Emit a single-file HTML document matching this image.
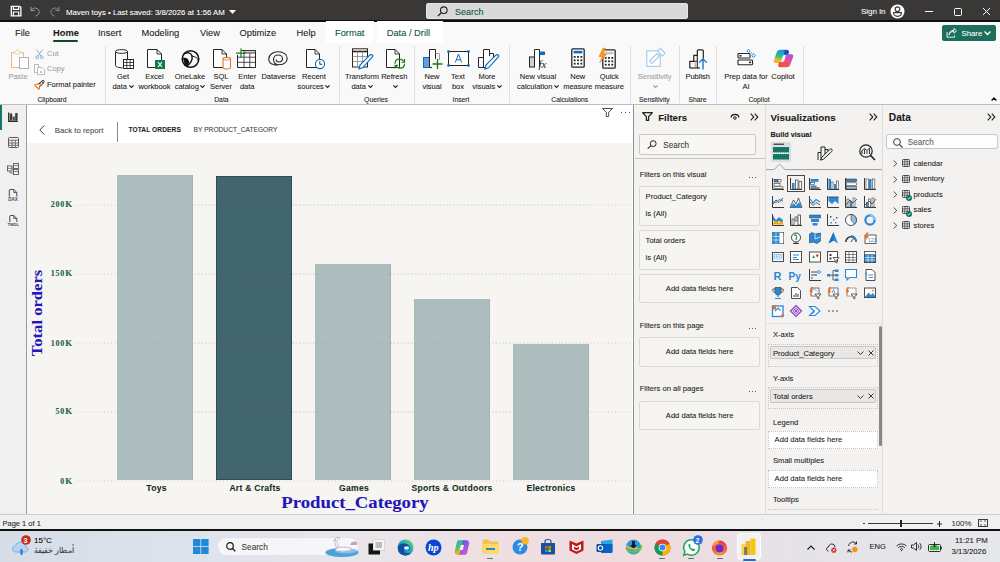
<!DOCTYPE html>
<html><head><meta charset="utf-8">
<style>
*{box-sizing:border-box}
html,body{margin:0;padding:0}
body{width:1000px;height:562px;overflow:hidden;position:relative;font-family:"Liberation Sans",sans-serif;background:#f7f7f7;color:#252423}
.t{-webkit-text-stroke:0.08px currentColor}
.a{position:absolute}
.t{position:absolute;white-space:nowrap;line-height:1}
svg{position:absolute;overflow:visible}
svg.ch{position:relative;display:inline-block;margin-left:1.5px;top:-1px}
</style></head><body>

<div class="a" style="left:0px;top:0px;width:1000px;height:21px;background:#393837;"></div>
<div class="a" style="left:0px;top:21px;width:1000px;height:83px;background:#f9f9f9;"></div>
<div class="a" style="left:0px;top:20.3px;width:1000px;height:1.3px;background:#0e0e0e;"></div>
<svg style="left:10px;top:5px" width="12" height="12" viewBox="0 0 12 12"><path d="M1.3 1.3H9.6L10.9 2.6V10.9H1.3Z" fill="none" stroke="#fff" stroke-width="1.3"/><path d="M3.4 1.3V4.3H8.7V1.3 M3.4 10.9V7H8.7V10.9" fill="none" stroke="#fff" stroke-width="1.2"/></svg>
<svg style="left:30px;top:6px" width="11" height="11" viewBox="0 0 11 11"><path d="M1 0.8V4.6H4.8" fill="none" stroke="#9a9a9a" stroke-width="1"/><path d="M1.2 4.4C2.4 2.2 5 1.4 7.2 2.6C9.6 4 9.8 7 7.8 8.8L5.5 10.2" fill="none" stroke="#9a9a9a" stroke-width="1"/></svg>
<svg style="left:49px;top:6px" width="11" height="11" viewBox="0 0 11 11"><path d="M10 0.8V4.6H6.2" fill="none" stroke="#8a8a8a" stroke-width="1"/><path d="M9.8 4.4C8.6 2.2 6 1.4 3.8 2.6C1.4 4 1.2 7 3.2 8.8L5.5 10.2" fill="none" stroke="#8a8a8a" stroke-width="1"/></svg>
<div class="t" style="left:66px;top:9px;font-size:7.8px;color:#fff;">Maven toys &#8226; Last saved: 3/8/2026 at 1:56 AM</div>
<svg style="left:229px;top:10px" width="7" height="4" viewBox="0 0 7 4"><path d="M0 0H7L3.5 4Z" fill="#fff"/></svg>
<div class="a" style="left:426px;top:3px;width:262px;height:16px;background:#d9d9d9;border-radius:2px;border:1px solid #e6e6e6"></div>
<svg style="left:437px;top:6px" width="11" height="11" viewBox="0 0 11 11"><circle cx="6.8" cy="4.2" r="3.3" fill="none" stroke="#222" stroke-width="1.1"/><path d="M4.4 6.6L1 10" stroke="#222" stroke-width="1.2"/></svg>
<div class="t" style="left:455px;top:7.5px;font-size:9px;color:#0f5444;">Search</div>
<div class="t" style="left:861px;top:8px;font-size:8px;color:#fff;">Sign in</div>
<svg style="left:890px;top:4px" width="15" height="15" viewBox="0 0 15 15"><circle cx="7.5" cy="7.5" r="7" fill="#fff"/><circle cx="7.5" cy="5.2" r="2.3" fill="none" stroke="#393837" stroke-width="1.1"/><path d="M3.5 8.6H11.5C11.5 11 9.8 12.4 7.5 12.4C5.2 12.4 3.5 11 3.5 8.6Z" fill="none" stroke="#393837" stroke-width="1.1"/></svg>
<div class="a" style="left:925px;top:11px;width:8px;height:1px;background:#fff;"></div>
<div class="a" style="left:954px;top:8px;width:8px;height:8px;background:transparent;border:1px solid #fff;border-radius:1.5px"></div>
<svg style="left:983px;top:8px" width="7" height="7" viewBox="0 0 7 7"><path d="M0 0L7 7M7 0L0 7" stroke="#fff" stroke-width="1"/></svg>
<div class="a" style="left:326px;top:21px;width:48px;height:22px;background:#fff;"></div>
<div class="a" style="left:377px;top:21px;width:66px;height:22px;background:#fff;"></div>
<div class="t" style="left:15px;top:28.8px;font-size:9.3px;color:#1b1a19;">File</div>
<div class="t" style="left:98px;top:28.8px;font-size:9.3px;color:#1b1a19;">Insert</div>
<div class="t" style="left:141.5px;top:28.8px;font-size:9.3px;color:#1b1a19;">Modeling</div>
<div class="t" style="left:200px;top:28.8px;font-size:9.3px;color:#1b1a19;">View</div>
<div class="t" style="left:239.5px;top:28.8px;font-size:9.3px;color:#1b1a19;">Optimize</div>
<div class="t" style="left:296.5px;top:28.8px;font-size:9.3px;color:#1b1a19;">Help</div>
<div class="t" style="left:53px;top:28.8px;font-size:9.3px;color:#1b1a19;font-weight:bold;">Home</div>
<div class="a" style="left:52.5px;top:40.3px;width:25.2px;height:1.7px;background:#0b4a2c;border-radius:1px"></div>
<div class="t" style="left:335px;top:29px;font-size:9.3px;color:#0a5438;">Format</div>
<div class="t" style="left:386.7px;top:29px;font-size:9.3px;color:#0a5438;">Data / Drill</div>
<div class="a" style="left:942px;top:25px;width:54px;height:16px;background:#1b6f5c;border-radius:2px"></div>
<svg style="left:946px;top:28px" width="11" height="10" viewBox="0 0 11 10"><path d="M1 4V9.2H8.5V7.5 M3 7C3.5 4.5 5.5 3.4 8 3.4V5.4L10.5 2.8L8 0.4V2.3C5 2.3 3 4.2 3 7Z" fill="none" stroke="#fff" stroke-width="0.9"/></svg>
<div class="t" style="left:961.5px;top:29.5px;font-size:7.8px;color:#fff;">Share</div>
<svg style="left:984px;top:31px" width="7" height="4" viewBox="0 0 7 4"><path d="M0.5 0.5L3.5 3.5L6.5 0.5" fill="none" stroke="#fff" stroke-width="1.4"/></svg>
<div class="t" style="left:-42px;top:73px;width:120px;text-align:center;font-size:7.5px;color:#a19f9d;">Paste</div>
<div class="t" style="left:63px;top:73px;width:120px;text-align:center;font-size:7.5px;color:#1b1a19;">Get</div>
<div class="t" style="left:63px;top:83.4px;width:120px;text-align:center;font-size:7.5px;color:#1b1a19;">data<svg class="ch" width="5" height="3" viewBox="0 0 5 3"><path d="M0.4 0.4L2.5 2.5L4.6 0.4" fill="none" stroke="#252423" stroke-width="1.2"/></svg></div>
<div class="t" style="left:94.5px;top:73px;width:120px;text-align:center;font-size:7.5px;color:#1b1a19;">Excel</div>
<div class="t" style="left:94.5px;top:83.4px;width:120px;text-align:center;font-size:7.5px;color:#1b1a19;">workbook</div>
<div class="t" style="left:130px;top:73px;width:120px;text-align:center;font-size:7.5px;color:#1b1a19;">OneLake</div>
<div class="t" style="left:130px;top:83.4px;width:120px;text-align:center;font-size:7.5px;color:#1b1a19;">catalog<svg class="ch" width="5" height="3" viewBox="0 0 5 3"><path d="M0.4 0.4L2.5 2.5L4.6 0.4" fill="none" stroke="#252423" stroke-width="1.2"/></svg></div>
<div class="t" style="left:161px;top:73px;width:120px;text-align:center;font-size:7.5px;color:#1b1a19;">SQL</div>
<div class="t" style="left:161px;top:83.4px;width:120px;text-align:center;font-size:7.5px;color:#1b1a19;">Server</div>
<div class="t" style="left:187.2px;top:73px;width:120px;text-align:center;font-size:7.5px;color:#1b1a19;">Enter</div>
<div class="t" style="left:187.2px;top:83.4px;width:120px;text-align:center;font-size:7.5px;color:#1b1a19;">data</div>
<div class="t" style="left:218.5px;top:73px;width:120px;text-align:center;font-size:7.5px;color:#1b1a19;">Dataverse</div>
<div class="t" style="left:254px;top:73px;width:120px;text-align:center;font-size:7.5px;color:#1b1a19;">Recent</div>
<div class="t" style="left:254px;top:83.4px;width:120px;text-align:center;font-size:7.5px;color:#1b1a19;">sources<svg class="ch" width="5" height="3" viewBox="0 0 5 3"><path d="M0.4 0.4L2.5 2.5L4.6 0.4" fill="none" stroke="#252423" stroke-width="1.2"/></svg></div>
<div class="t" style="left:302px;top:73px;width:120px;text-align:center;font-size:7.5px;color:#1b1a19;">Transform</div>
<div class="t" style="left:302px;top:83.4px;width:120px;text-align:center;font-size:7.5px;color:#1b1a19;">data<svg class="ch" width="5" height="3" viewBox="0 0 5 3"><path d="M0.4 0.4L2.5 2.5L4.6 0.4" fill="none" stroke="#252423" stroke-width="1.2"/></svg></div>
<div class="t" style="left:334.3px;top:73px;width:120px;text-align:center;font-size:7.5px;color:#1b1a19;">Refresh</div>
<div class="t" style="left:334.3px;top:83.4px;width:120px;text-align:center;font-size:7.5px;color:#1b1a19;"><svg class="ch" width="5" height="3" viewBox="0 0 5 3"><path d="M0.4 0.4L2.5 2.5L4.6 0.4" fill="none" stroke="#252423" stroke-width="1.2"/></svg></div>
<div class="t" style="left:372px;top:73px;width:120px;text-align:center;font-size:7.5px;color:#1b1a19;">New</div>
<div class="t" style="left:372px;top:83.4px;width:120px;text-align:center;font-size:7.5px;color:#1b1a19;">visual</div>
<div class="t" style="left:398px;top:73px;width:120px;text-align:center;font-size:7.5px;color:#1b1a19;">Text</div>
<div class="t" style="left:398px;top:83.4px;width:120px;text-align:center;font-size:7.5px;color:#1b1a19;">box</div>
<div class="t" style="left:427px;top:73px;width:120px;text-align:center;font-size:7.5px;color:#1b1a19;">More</div>
<div class="t" style="left:427px;top:83.4px;width:120px;text-align:center;font-size:7.5px;color:#1b1a19;">visuals<svg class="ch" width="5" height="3" viewBox="0 0 5 3"><path d="M0.4 0.4L2.5 2.5L4.6 0.4" fill="none" stroke="#252423" stroke-width="1.2"/></svg></div>
<div class="t" style="left:478px;top:73px;width:120px;text-align:center;font-size:7.5px;color:#1b1a19;">New visual</div>
<div class="t" style="left:478px;top:83.4px;width:120px;text-align:center;font-size:7.5px;color:#1b1a19;">calculation<svg class="ch" width="5" height="3" viewBox="0 0 5 3"><path d="M0.4 0.4L2.5 2.5L4.6 0.4" fill="none" stroke="#252423" stroke-width="1.2"/></svg></div>
<div class="t" style="left:517.75px;top:73px;width:120px;text-align:center;font-size:7.5px;color:#1b1a19;">New</div>
<div class="t" style="left:517.75px;top:83.4px;width:120px;text-align:center;font-size:7.5px;color:#1b1a19;">measure</div>
<div class="t" style="left:549.3px;top:73px;width:120px;text-align:center;font-size:7.5px;color:#1b1a19;">Quick</div>
<div class="t" style="left:549.3px;top:83.4px;width:120px;text-align:center;font-size:7.5px;color:#1b1a19;">measure</div>
<div class="t" style="left:594.7px;top:73px;width:120px;text-align:center;font-size:7.5px;color:#a19f9d;">Sensitivity</div>
<div class="t" style="left:594.7px;top:83.4px;width:120px;text-align:center;font-size:7.5px;color:#a19f9d;"><svg class="ch" width="5" height="3" viewBox="0 0 5 3"><path d="M0.4 0.4L2.5 2.5L4.6 0.4" fill="none" stroke="#a19f9d" stroke-width="1.2"/></svg></div>
<div class="t" style="left:637.7px;top:73px;width:120px;text-align:center;font-size:7.5px;color:#1b1a19;">Publish</div>
<div class="t" style="left:686px;top:73px;width:120px;text-align:center;font-size:7.5px;color:#1b1a19;">Prep data for</div>
<div class="t" style="left:686px;top:83.4px;width:120px;text-align:center;font-size:7.5px;color:#1b1a19;">AI</div>
<div class="t" style="left:723px;top:73px;width:120px;text-align:center;font-size:7.5px;color:#1b1a19;">Copilot</div>
<div class="t" style="left:47px;top:49.6px;font-size:7.5px;color:#a19f9d;">Cut</div>
<div class="t" style="left:47px;top:65.2px;font-size:7.5px;color:#a19f9d;">Copy</div>
<div class="t" style="left:47px;top:81px;font-size:7.5px;color:#1b1a19;">Format painter</div>
<div class="t" style="left:-8px;top:97px;width:120px;text-align:center;font-size:6.8px;color:#1b1a19;">Clipboard</div>
<div class="t" style="left:161.4px;top:97px;width:120px;text-align:center;font-size:6.8px;color:#1b1a19;">Data</div>
<div class="t" style="left:316px;top:97px;width:120px;text-align:center;font-size:6.8px;color:#1b1a19;">Queries</div>
<div class="t" style="left:401px;top:97px;width:120px;text-align:center;font-size:6.8px;color:#1b1a19;">Insert</div>
<div class="t" style="left:509.75px;top:97px;width:120px;text-align:center;font-size:6.8px;color:#1b1a19;">Calculations</div>
<div class="t" style="left:594.4px;top:97px;width:120px;text-align:center;font-size:6.8px;color:#1b1a19;">Sensitivity</div>
<div class="t" style="left:637.5px;top:97px;width:120px;text-align:center;font-size:6.8px;color:#1b1a19;">Share</div>
<div class="t" style="left:699px;top:97px;width:120px;text-align:center;font-size:6.8px;color:#1b1a19;">Copilot</div>
<div class="a" style="left:105px;top:46px;width:1px;height:57px;background:#e1dfdd;"></div>
<div class="a" style="left:339px;top:46px;width:1px;height:57px;background:#e1dfdd;"></div>
<div class="a" style="left:414px;top:46px;width:1px;height:57px;background:#e1dfdd;"></div>
<div class="a" style="left:509px;top:46px;width:1px;height:57px;background:#e1dfdd;"></div>
<div class="a" style="left:630px;top:46px;width:1px;height:57px;background:#e1dfdd;"></div>
<div class="a" style="left:679px;top:46px;width:1px;height:57px;background:#e1dfdd;"></div>
<div class="a" style="left:716px;top:46px;width:1px;height:57px;background:#e1dfdd;"></div>
<div class="a" style="left:803px;top:46px;width:1px;height:57px;background:#e1dfdd;"></div>
<svg style="left:990.5px;top:97px" width="6" height="4" viewBox="0 0 6 4"><path d="M0.6 3.4L3 1L5.4 3.4" fill="none" stroke="#111" stroke-width="1.4"/></svg>
<div class="a" style="left:0px;top:104px;width:1000px;height:1px;background:#bdbdbd;"></div>
<!-- Paste -->
<svg style="left:10px;top:49px" width="20" height="21" viewBox="0 0 20 21"><path d="M1.5 3.5H4.5L7.5 0.8L10.5 3.5H13.5V18.5H1.5Z" fill="#fff" stroke="#f0b77a" stroke-width="1"/><path d="M4.5 3.5V5H10.5V3.5" fill="none" stroke="#c8c6c4" stroke-width="0.8"/><rect x="9.5" y="8.5" width="9" height="11" fill="#fff" stroke="#b3b0ad" stroke-width="1"/></svg>
<!-- Cut -->
<svg style="left:35px;top:49px" width="9" height="10" viewBox="0 0 9 10"><path d="M1.5 0.5L6 7M7.5 0.5L3 7" stroke="#a19f9d" stroke-width="0.9" fill="none"/><circle cx="2.2" cy="8.2" r="1.4" fill="#fff" stroke="#6fa8dc" stroke-width="0.9"/><circle cx="6.8" cy="8.2" r="1.4" fill="#fff" stroke="#6fa8dc" stroke-width="0.9"/></svg>
<!-- Copy -->
<svg style="left:34px;top:64px" width="11" height="11" viewBox="0 0 11 11"><path d="M0.5 0.5H4.5V8.5H0.5Z" fill="#fff" stroke="#b3b0ad" stroke-width="0.9"/><path d="M3.5 3.5H8L10.5 6V10.5H3.5Z" fill="#fff" stroke="#b3b0ad" stroke-width="0.9"/><rect x="6" y="7" width="2" height="2" fill="#c8c6c4"/></svg>
<!-- Format painter -->
<svg style="left:34px;top:80px" width="11" height="10" viewBox="0 0 11 10"><path d="M0.6 5L6.5 3L5 9.2Z" fill="#fff" stroke="#e8742a" stroke-width="1.2" stroke-linejoin="round"/><path d="M4.5 4L8 1M6 6.5L9.5 3" stroke="#252423" stroke-width="1"/><circle cx="9" cy="1.6" r="1.2" fill="none" stroke="#252423" stroke-width="0.9"/></svg>
<!-- Get data -->
<svg style="left:114px;top:48px" width="21" height="22" viewBox="0 0 21 22"><path d="M1.5 3.5C1.5 1 13.5 1 13.5 3.5V11 M1.5 3.5V17.5C1.5 19 5 19.8 8.5 19.8" fill="none" stroke="#252423" stroke-width="1"/><path d="M1.5 3.5C1.5 6 13.5 6 13.5 3.5" fill="none" stroke="#252423" stroke-width="1"/><rect x="9.5" y="11.5" width="10" height="9" fill="#fff" stroke="#252423" stroke-width="1"/><path d="M9.5 14.5H19.5M9.5 17.5H19.5M12.8 11.5V20.5M16.2 11.5V20.5" stroke="#252423" stroke-width="0.8"/></svg>
<!-- Excel -->
<svg style="left:147px;top:48px" width="19" height="22" viewBox="0 0 19 22"><path d="M0.5 1.5H10L14.5 6V19.5H0.5Z" fill="#fff" stroke="#252423" stroke-width="1"/><path d="M10 1.5V6H14.5" fill="none" stroke="#252423" stroke-width="0.9"/><rect x="8" y="12" width="10" height="9" fill="#107c41"/><path d="M11 14L15 19M15 14L11 19" stroke="#fff" stroke-width="1.2"/></svg>
<!-- OneLake -->
<svg style="left:181px;top:49px" width="19" height="20" viewBox="0 0 19 20"><circle cx="9.5" cy="10" r="8.3" fill="none" stroke="#111" stroke-width="1.5"/><path d="M3 5C6 3 10 3.5 11 7C12 10.5 9 16 5.5 17" fill="none" stroke="#111" stroke-width="1.4"/><path d="M2 9C4.5 8 7.5 9.5 8 12.5C8.4 15 6 17.5 3.8 16" fill="#111"/><path d="M11 7C14 7.5 17 9 17.5 12" fill="none" stroke="#111" stroke-width="1"/></svg>
<!-- SQL -->
<svg style="left:213px;top:49px" width="19" height="21" viewBox="0 0 19 21"><path d="M0.5 0.5H9L13.5 5V18.5H0.5Z" fill="#fff" stroke="#252423" stroke-width="1"/><path d="M9 0.5V5H13.5" fill="none" stroke="#252423" stroke-width="0.9"/><path d="M10 9.5C10 8 17.5 8 17.5 9.5V18.8C17.5 20.3 10 20.3 10 18.8Z" fill="#fff" stroke="#e8742a" stroke-width="1.1"/><path d="M10 10C10 11.3 17.5 11.3 17.5 10" fill="none" stroke="#e8742a" stroke-width="0.9"/></svg>
<!-- Enter data -->
<svg style="left:236px;top:48px" width="21" height="21" viewBox="0 0 21 21"><path d="M5.5 2.5H19.5V19.5H1.5V7" fill="#fff" stroke="#252423" stroke-width="1"/><path d="M8 2.5H19.5V5H8Z" fill="#d2d0ce" stroke="#252423" stroke-width="0.8"/><path d="M1.5 9.2H19.5M1.5 14.3H19.5M8 5V19.5M13.8 5V19.5" stroke="#252423" stroke-width="0.8"/><path d="M5 0.5V10M0.2 5.2H9.8" stroke="#107c10" stroke-width="1.2"/></svg>
<!-- Dataverse -->
<svg style="left:268px;top:51px" width="20" height="15" viewBox="0 0 20 15"><path d="M6 13.5C2.5 13.5 0.8 11 0.8 8C0.8 3.5 5 0.8 10 0.8C15.5 0.8 19.2 3.5 19.2 7.2C19.2 11 16 13.8 11.5 13.8C7.5 13.8 5.5 11.5 5.5 8.5C5.5 5.8 7.8 4 10.2 4C12.6 4 14.5 5.6 14.5 7.6C14.5 9.6 12.8 11 10.8 11C9.2 11 8.2 10 8.2 8.6" fill="none" stroke="#252423" stroke-width="1.1"/><path d="M6 13.5C8 14.5 9 14 9.5 13.5" fill="none" stroke="#252423" stroke-width="1.1"/></svg>
<!-- Recent sources -->
<svg style="left:306px;top:49px" width="20" height="21" viewBox="0 0 20 21"><path d="M0.5 0.5H9L13.5 5V18.5H0.5Z" fill="#fff" stroke="#252423" stroke-width="1"/><path d="M9 0.5V5H13.5" fill="none" stroke="#252423" stroke-width="0.9"/><circle cx="14" cy="15" r="4.6" fill="#fff" stroke="#0f6cbd" stroke-width="1.1"/><path d="M13.8 12.2V15.3H16.2" fill="none" stroke="#252423" stroke-width="0.9"/></svg>
<!-- Transform -->
<svg style="left:352px;top:48px" width="21" height="22" viewBox="0 0 21 22"><rect x="0.5" y="0.8" width="15" height="18.2" fill="#fff" stroke="#252423" stroke-width="1"/><path d="M0.5 3.5H15.5" stroke="#252423" stroke-width="1.6"/><path d="M0.5 8.5H15.5M0.5 13.5H15.5M5.5 3.5V19M10.5 3.5V19" stroke="#8a8886" stroke-width="0.8"/><path d="M7 20.8L8 17L17.8 7.2C18.6 6.4 19.8 6.4 20.3 7C20.9 7.6 20.8 8.6 20 9.4L10.5 19.8Z" fill="#fff" stroke="#0f6cbd" stroke-width="1.2"/></svg>
<!-- Refresh -->
<svg style="left:386px;top:48px" width="20" height="22" viewBox="0 0 20 22"><path d="M0.5 1.5H9L13.5 6V19.5H0.5Z" fill="#fff" stroke="#252423" stroke-width="1"/><path d="M9 1.5V6H13.5" fill="none" stroke="#252423" stroke-width="0.9"/><path d="M9 15.8C9 13 11 11.2 13.6 11.2C15.6 11.2 17.2 12.4 17.8 13.6M18.5 15.8C18.5 18.6 16.5 20.2 14 20.2C12 20.2 10.3 19 9.7 17.8" fill="none" stroke="#107c10" stroke-width="1.2"/><path d="M18.5 11V14.2H15.6M9 20.6V17.4H11.9" fill="none" stroke="#107c10" stroke-width="1.1"/></svg>
<!-- New visual -->
<svg style="left:423px;top:48px" width="21" height="22" viewBox="0 0 21 22"><rect x="0.5" y="9.5" width="6" height="10" fill="#62a0dc" stroke="#0f6cbd" stroke-width="1"/><path d="M6.5 19.5V1.5H12.5V11" fill="#fff" stroke="#252423" stroke-width="1"/><path d="M12.5 5.5H16.5V12" fill="none" stroke="#a19f9d" stroke-width="1"/><path d="M6.5 19.5H9" stroke="#252423" stroke-width="1"/><path d="M14.5 11V21M9.5 16H19.5" stroke="#107c10" stroke-width="1.3"/></svg>
<!-- Text box -->
<svg style="left:447px;top:50px" width="23" height="17" viewBox="0 0 23 17"><rect x="1.5" y="1.5" width="20" height="14" fill="#fff" stroke="#252423" stroke-width="1"/><rect x="0.3" y="0.3" width="2.4" height="2.4" fill="#0f6cbd"/><rect x="20.3" y="0.3" width="2.4" height="2.4" fill="#0f6cbd"/><rect x="0.3" y="14.3" width="2.4" height="2.4" fill="#0f6cbd"/><rect x="20.3" y="14.3" width="2.4" height="2.4" fill="#0f6cbd"/><path d="M8.3 12.5L11.5 4L14.7 12.5M9.4 9.8H13.6" fill="none" stroke="#0f6cbd" stroke-width="1"/></svg>
<!-- More visuals -->
<svg style="left:478px;top:48px" width="21" height="22" viewBox="0 0 21 22"><path d="M0.5 19.5V9.5H5.5M5.5 19.5V1.5H11.5V8 M11.5 5.5H15.5V9" fill="#fff" stroke="#252423" stroke-width="1"/><path d="M0.5 19.5H8" stroke="#252423" stroke-width="1"/><path d="M7 21L8 17L17.8 7.2C18.6 6.4 19.8 6.4 20.3 7C20.9 7.6 20.8 8.6 20 9.4L10.5 19.8Z" fill="#fff" stroke="#0f6cbd" stroke-width="1.2"/></svg>
<!-- New visual calc -->
<svg style="left:529px;top:48px" width="20" height="21" viewBox="0 0 20 21"><rect x="0.5" y="9" width="5" height="10" fill="#d2d0ce" stroke="#252423" stroke-width="1"/><path d="M5.5 19V1.5H10.5V19" fill="#fff" stroke="#252423" stroke-width="1"/><path d="M10.5 3.5H16V7H10.5" fill="#0f6cbd"/><text x="9.5" y="19.5" font-family="Liberation Serif" font-style="italic" font-size="11" fill="#252423">fx</text></svg>
<!-- New measure -->
<svg style="left:571px;top:48px" width="14" height="20" viewBox="0 0 14 20"><rect x="0.8" y="0.8" width="12.4" height="18.4" rx="1" fill="#fff" stroke="#252423" stroke-width="1.3"/><rect x="2.6" y="2.8" width="8.8" height="2.6" fill="#0f6cbd"/><g fill="#252423"><rect x="2.8" y="8" width="1.8" height="1.8"/><rect x="6.1" y="8" width="1.8" height="1.8"/><rect x="9.4" y="8" width="1.8" height="1.8"/><rect x="2.8" y="11.4" width="1.8" height="1.8"/><rect x="6.1" y="11.4" width="1.8" height="1.8"/><rect x="9.4" y="11.4" width="1.8" height="1.8"/><rect x="2.8" y="14.8" width="1.8" height="1.8"/><rect x="6.1" y="14.8" width="1.8" height="1.8"/><rect x="9.4" y="14.8" width="1.8" height="1.8"/></g></svg>
<!-- Quick measure -->
<svg style="left:598px;top:48px" width="18" height="21" viewBox="0 0 18 21"><rect x="4.8" y="1.8" width="12.4" height="18.4" rx="1" fill="#fff" stroke="#252423" stroke-width="1.3"/><rect x="6.6" y="3.8" width="8.8" height="2.6" fill="#c8c6c4"/><g fill="#252423"><rect x="6.8" y="9" width="1.8" height="1.8"/><rect x="10.1" y="9" width="1.8" height="1.8"/><rect x="13.4" y="9" width="1.8" height="1.8"/><rect x="6.8" y="12.4" width="1.8" height="1.8"/><rect x="10.1" y="12.4" width="1.8" height="1.8"/><rect x="13.4" y="12.4" width="1.8" height="1.8"/><rect x="6.8" y="15.8" width="1.8" height="1.8"/><rect x="10.1" y="15.8" width="1.8" height="1.8"/><rect x="13.4" y="15.8" width="1.8" height="1.8"/></g><path d="M5 0.3L1 8.5H4.5L1.8 14.5L8.5 6H5L7.5 0.3Z" fill="#f7a400" stroke="#e8742a" stroke-width="0.6"/></svg>
<!-- Sensitivity -->
<svg style="left:646px;top:48px" width="20" height="20" viewBox="0 0 20 20"><rect x="0.8" y="2.8" width="13.4" height="15.6" fill="#fff" stroke="#9ccbf0" stroke-width="1.1"/><path d="M3.5 13L11 5.5L13.5 8L6 15.5Z" fill="none" stroke="#9ccbf0" stroke-width="1.1"/><path d="M11.5 3L14.5 0.6L19 5L16.5 8Z" fill="#fff" stroke="#9ccbf0" stroke-width="1.1"/></svg>
<!-- Publish -->
<svg style="left:689px;top:49px" width="20" height="21" viewBox="0 0 20 21"><path d="M0.8 19V12.3H4.8V6.3H8.3V1.8C8.3 1.2 8.7 0.8 9.3 0.8H13.3C13.9 0.8 14.3 1.2 14.3 1.8V9.5" fill="none" stroke="#252423" stroke-width="1.2"/><path d="M0.8 19H11" stroke="#252423" stroke-width="1.2"/><path d="M4.8 12.3H8.3V19M8.3 6.3V12" fill="none" stroke="#252423" stroke-width="1.1"/><path d="M6.2 13.5V18" stroke="#a19f9d" stroke-width="1"/><path d="M14 20.5V10M10.2 13.6L14 9.8L17.8 13.6" fill="none" stroke="#0f6cbd" stroke-width="1.3"/></svg>
<!-- Prep data for AI -->
<svg style="left:737px;top:49px" width="19" height="17" viewBox="0 0 19 17"><rect x="1" y="4.5" width="12" height="4.5" rx="0.8" fill="#fff" stroke="#252423" stroke-width="1.1"/><rect x="1" y="11" width="14.5" height="4.8" rx="0.8" fill="#fff" stroke="#252423" stroke-width="1.1"/><rect x="2.5" y="6" width="2" height="1.6" fill="#252423"/><rect x="12" y="12.6" width="2" height="1.6" fill="#252423"/><path d="M11.5 0.3L13 1.8L11.5 3.3L10 1.8Z M16.5 4.8L18.3 6.6L16.5 8.4L14.7 6.6Z" fill="#fff" stroke="#0f6cbd" stroke-width="0.9"/><circle cx="14.2" cy="3.8" r="0.6" fill="#0f6cbd"/></svg>
<!-- Copilot -->
<svg style="left:773px;top:49px" width="21" height="19" viewBox="0 0 21 19"><defs><linearGradient id="cg1" x1="0.5" y1="0" x2="0.3" y2="1"><stop offset="0" stop-color="#1b8ff0"/><stop offset="0.5" stop-color="#2fc08a"/><stop offset="0.85" stop-color="#f2c224"/><stop offset="1" stop-color="#f59a1e"/></linearGradient><linearGradient id="cg2" x1="0.8" y1="0" x2="0.3" y2="1"><stop offset="0" stop-color="#a54ee8"/><stop offset="0.45" stop-color="#ea4f9c"/><stop offset="1" stop-color="#f2552c"/></linearGradient></defs><path d="M7.5 0.8H14C15.3 0.8 16.2 2 15.8 3.3L15 6H11.8C10.6 6 9.8 6.8 9.5 7.8L7.8 13.8H2.5C1.2 13.8 0.4 12.6 0.8 11.4L3.6 3.4C4.2 1.8 5.6 0.8 7.5 0.8Z" fill="url(#cg1)"/><path d="M11.5 1.2H14C15.3 1.2 16.2 2.2 15.8 3.4L15.2 5.8H11.2Z" fill="#1432c8" opacity="0.8"/><path d="M13.5 18.2H7C5.7 18.2 4.8 17 5.2 15.8L6 13H9.2C10.4 13 11.2 12.2 11.5 11.2L13.2 5.2H18.5C19.8 5.2 20.6 6.4 20.2 7.6L17.4 15.6C16.8 17.2 15.4 18.2 13.5 18.2Z" fill="url(#cg2)"/></svg>

<div class="a" style="left:0px;top:105px;width:26px;height:410px;background:#f0f0f0;"></div>
<div class="a" style="left:26px;top:105px;width:608px;height:410px;background:#ffffff;border-left:1px solid #9a9a9a"></div>
<div class="a" style="left:27px;top:143px;width:605px;height:371px;background:#f6f5f1;"></div>
<div class="a" style="left:633px;top:105px;width:132px;height:410px;background:#f4f3ef;border-left:1px solid #8f8f8f"></div>
<div class="a" style="left:765px;top:105px;width:117px;height:410px;background:#f3f2f1;border-left:1px solid #e1dfdd"></div>
<div class="a" style="left:882px;top:105px;width:118px;height:410px;background:#f3f2f1;border-left:1px solid #e1dfdd"></div>
<div class="a" style="left:0px;top:105px;width:2px;height:25px;background:#117865;"></div>
<svg style="left:8px;top:112px" width="10" height="10" viewBox="0 0 10 10"><path d="M0.7 0.5V9.3H9.8" fill="none" stroke="#2b2a29" stroke-width="1.3"/><rect x="1.8" y="1.5" width="2.4" height="7.2" fill="#3b3a39"/><rect x="4.6" y="4.5" width="2.2" height="4.2" fill="#4b4a49"/><rect x="7.2" y="1" width="2.4" height="7.7" fill="#3b3a39"/></svg>
<svg style="left:8px;top:137px" width="11" height="11" viewBox="0 0 11 11"><rect x="0.5" y="0.5" width="10" height="10" rx="1" fill="none" stroke="#5a5958" stroke-width="1"/><path d="M0.5 3.2H10.5M0.5 6H10.5M0.5 8.3H10.5M4 3.2V10.5M7.3 3.2V10.5" stroke="#5a5958" stroke-width="0.8"/></svg>
<svg style="left:7px;top:163px" width="12" height="12" viewBox="0 0 12 12"><rect x="0.5" y="3" width="4.5" height="5" fill="#f0f0f0" stroke="#5a5958" stroke-width="0.9"/><path d="M0.5 5.4H5" stroke="#5a5958" stroke-width="0.7"/><rect x="6.5" y="0.5" width="5" height="5" fill="#f0f0f0" stroke="#5a5958" stroke-width="0.9"/><path d="M6.5 2.5H11.5" stroke="#5a5958" stroke-width="0.7"/><rect x="6.5" y="6.5" width="5" height="5" fill="#f0f0f0" stroke="#5a5958" stroke-width="0.9"/><path d="M6.5 8.5H11.5" stroke="#5a5958" stroke-width="0.7"/><path d="M5 5H6.5M3 8V10H6.5" fill="none" stroke="#5a5958" stroke-width="0.8"/></svg>
<svg style="left:7px;top:189px" width="12" height="12" viewBox="0 0 12 12"><path d="M2.3 7.5V1.2C2.3 0.8 2.6 0.5 3 0.5H6.8L9.8 3.5V7.5" fill="none" stroke="#4a4948" stroke-width="1"/><path d="M6.8 0.5V3.5H9.8" fill="none" stroke="#4a4948" stroke-width="0.9"/><text x="6" y="11.6" text-anchor="middle" font-family="Liberation Sans" font-weight="bold" font-size="4.6" fill="#4a4948">DAX</text></svg>
<svg style="left:7px;top:215px" width="12" height="12" viewBox="0 0 12 12"><path d="M2.8 7V1.2C2.8 0.8 3.1 0.5 3.5 0.5H6.8L9.8 3.5V7" fill="none" stroke="#4a4948" stroke-width="1"/><path d="M6.8 0.5V3.5H9.8" fill="none" stroke="#4a4948" stroke-width="0.9"/><text x="6.2" y="11.2" text-anchor="middle" font-family="Liberation Sans" font-weight="bold" font-size="4.2" fill="#4a4948">TMDL</text></svg>
<svg style="left:39px;top:125px" width="6" height="10" viewBox="0 0 6 10"><path d="M5.3 0.5L0.8 5L5.3 9.5" fill="none" stroke="#3b3a39" stroke-width="1"/></svg>
<div class="t" style="left:54.8px;top:127.2px;font-size:7.8px;color:#484644;">Back to report</div>
<div class="a" style="left:117px;top:122px;width:1px;height:20px;background:#8a8886;"></div>
<div class="t" style="left:128.4px;top:126.8px;font-size:6.6px;color:#252423;font-weight:bold;letter-spacing:0.1px">TOTAL ORDERS</div>
<div class="t" style="left:193.6px;top:126.8px;font-size:6.6px;color:#3b3a39;letter-spacing:0.03px">BY PRODUCT_CATEGORY</div>
<svg style="left:602px;top:108px" width="11" height="9" viewBox="0 0 11 9"><path d="M0.5 0.5H10.5L6.7 4.2V8.5H4.3V4.2Z" fill="none" stroke="#3b3a39" stroke-width="0.9"/></svg>
<div class="a" style="left:620.8000000000001px;top:111.5px;width:1.7px;height:1.7px;background:#1b1a19;border-radius:50%"></div>
<div class="a" style="left:624.7px;top:111.5px;width:1.7px;height:1.7px;background:#1b1a19;border-radius:50%"></div>
<div class="a" style="left:628.6px;top:111.5px;width:1.7px;height:1.7px;background:#1b1a19;border-radius:50%"></div>
<svg style="left:76px;top:203.89999999999998px" width="556" height="2"><path d="M0 1H556" stroke="#cfcec9" stroke-width="1" stroke-dasharray="1 2.5"/></svg>
<svg style="left:76px;top:272.7px" width="556" height="2"><path d="M0 1H556" stroke="#cfcec9" stroke-width="1" stroke-dasharray="1 2.5"/></svg>
<svg style="left:76px;top:342.2px" width="556" height="2"><path d="M0 1H556" stroke="#cfcec9" stroke-width="1" stroke-dasharray="1 2.5"/></svg>
<svg style="left:76px;top:411.0px" width="556" height="2"><path d="M0 1H556" stroke="#cfcec9" stroke-width="1" stroke-dasharray="1 2.5"/></svg>
<svg style="left:76px;top:480.2px" width="556" height="2"><path d="M0 1H556" stroke="#cfcec9" stroke-width="1" stroke-dasharray="1 2.5"/></svg>
<div class="a" style="left:117px;top:175px;width:76px;height:304.8px;background:#adbdbd;border-right:1px solid #a2b2b3;"></div>
<div class="a" style="left:216px;top:176px;width:76px;height:303.8px;background:#42666e;border:1px solid #2a4d58;"></div>
<div class="a" style="left:315px;top:263.5px;width:76px;height:216.3px;background:#adbdbd;border-right:1px solid #a2b2b3;"></div>
<div class="a" style="left:413.5px;top:299px;width:76px;height:180.8px;background:#adbdbd;border-right:1px solid #a2b2b3;"></div>
<div class="a" style="left:512.6px;top:343.7px;width:76px;height:136.10000000000002px;background:#adbdbd;border-right:1px solid #a2b2b3;"></div>
<svg style="left:117px;top:203.89999999999998px" width="472" height="2"><path d="M0 1H472" stroke="rgba(110,125,125,0.18)" stroke-width="1" stroke-dasharray="1 2.5"/></svg>
<svg style="left:117px;top:272.7px" width="472" height="2"><path d="M0 1H472" stroke="rgba(110,125,125,0.18)" stroke-width="1" stroke-dasharray="1 2.5"/></svg>
<svg style="left:117px;top:342.2px" width="472" height="2"><path d="M0 1H472" stroke="rgba(110,125,125,0.18)" stroke-width="1" stroke-dasharray="1 2.5"/></svg>
<svg style="left:117px;top:411.0px" width="472" height="2"><path d="M0 1H472" stroke="rgba(110,125,125,0.18)" stroke-width="1" stroke-dasharray="1 2.5"/></svg>
<div class="t" style="left:32px;top:200.2px;width:40px;text-align:right;font-family:'Liberation Serif',serif;font-weight:bold;font-size:8.8px;color:#17604f;"><span style="font-size:8px;letter-spacing:0.8px">200</span>K</div>
<div class="t" style="left:32px;top:269px;width:40px;text-align:right;font-family:'Liberation Serif',serif;font-weight:bold;font-size:8.8px;color:#17604f;"><span style="font-size:8px;letter-spacing:0.8px">150</span>K</div>
<div class="t" style="left:32px;top:338.5px;width:40px;text-align:right;font-family:'Liberation Serif',serif;font-weight:bold;font-size:8.8px;color:#17604f;"><span style="font-size:8px;letter-spacing:0.8px">100</span>K</div>
<div class="t" style="left:32px;top:407.3px;width:40px;text-align:right;font-family:'Liberation Serif',serif;font-weight:bold;font-size:8.8px;color:#17604f;"><span style="font-size:8px;letter-spacing:0.8px">50</span>K</div>
<div class="t" style="left:32px;top:476.5px;width:40px;text-align:right;font-family:'Liberation Serif',serif;font-weight:bold;font-size:8.8px;color:#17604f;"><span style="font-size:8px;letter-spacing:0.8px">0</span>K</div>
<div class="t" style="left:86.5px;top:483.8px;width:140px;text-align:center;font-size:8.6px;color:#142a25;font-weight:bold;letter-spacing:0.25px">Toys</div>
<div class="t" style="left:185.0px;top:483.8px;width:140px;text-align:center;font-size:8.6px;color:#142a25;font-weight:bold;letter-spacing:0.25px">Art &amp; Crafts</div>
<div class="t" style="left:284.0px;top:483.8px;width:140px;text-align:center;font-size:8.6px;color:#142a25;font-weight:bold;letter-spacing:0.25px">Games</div>
<div class="t" style="left:382.0px;top:483.8px;width:140px;text-align:center;font-size:8.6px;color:#142a25;font-weight:bold;letter-spacing:0.25px">Sports &amp; Outdoors</div>
<div class="t" style="left:481.0px;top:483.8px;width:140px;text-align:center;font-size:8.6px;color:#142a25;font-weight:bold;letter-spacing:0.25px">Electronics</div>
<div class="t" style="left:37px;top:313px;width:0;height:0"><div style="position:absolute;left:0;top:0;transform:translate(-50%,-50%) rotate(-90deg) scaleX(1.07);font-family:'Liberation Serif',serif;font-weight:bold;font-size:15.5px;color:#2315b8;white-space:nowrap;line-height:1">Total orders</div></div>
<div class="t" style="left:354.5px;top:503px;width:0;height:0"><div style="position:absolute;left:0;top:0;transform:translate(-50%,-50%) scaleX(1.17);font-family:'Liberation Serif',serif;font-weight:bold;font-size:16px;color:#2315b8;white-space:nowrap;line-height:1">Product_Category</div></div>
<svg style="left:641.5px;top:112px" width="11" height="9" viewBox="0 0 11 9"><path d="M0.7 0.7H10.3L6.6 4.6V8.4H4.4V4.6Z" fill="none" stroke="#252423" stroke-width="1.3" stroke-linejoin="round"/></svg>
<div class="t" style="left:658.2px;top:113.2px;font-size:9.6px;color:#1b1a19;font-weight:bold;">Filters</div>
<svg style="left:730px;top:112.5px" width="10" height="7" viewBox="0 0 10 7"><path d="M0.9 4.4A4.2 3.8 0 0 1 9.1 4.4" fill="none" stroke="#1b1a19" stroke-width="1.1"/><circle cx="4.9" cy="5" r="1.3" fill="none" stroke="#1b1a19" stroke-width="1"/></svg>
<svg style="left:750px;top:112.5px" width="9" height="8" viewBox="0 0 9 8"><path d="M0.7 0.7L3.8 4L0.7 7.3M4.7 0.7L7.8 4L4.7 7.3" fill="none" stroke="#252423" stroke-width="1.1"/></svg>
<div class="a" style="left:639.4px;top:133.6px;width:117px;height:21.7px;background:#f8f7f4;border:1px solid #c8c6c4;border-radius:2px"></div>
<svg style="left:646.5px;top:140px" width="10" height="9" viewBox="0 0 10 9"><circle cx="6.2" cy="3.6" r="2.9" fill="none" stroke="#252423" stroke-width="1"/><path d="M4.1 5.7L0.7 8.7" stroke="#252423" stroke-width="1.1"/></svg>
<div class="t" style="left:663.2px;top:142px;font-size:8.2px;color:#3b3a39;">Search</div>
<div class="a" style="left:634.5px;top:157.6px;width:130px;height:1px;background:#c8c6c4;"></div>
<div class="t" style="left:639.7px;top:170.7px;font-size:7.6px;color:#1b1a19;">Filters on this visual</div>
<div class="a" style="left:749.0px;top:176.5px;width:1.1px;height:1.1px;background:#605e5c;"></div>
<div class="a" style="left:751.8px;top:176.5px;width:1.1px;height:1.1px;background:#605e5c;"></div>
<div class="a" style="left:754.6px;top:176.5px;width:1.1px;height:1.1px;background:#605e5c;"></div>
<div class="a" style="left:749.0px;top:328px;width:1.1px;height:1.1px;background:#605e5c;"></div>
<div class="a" style="left:751.8px;top:328px;width:1.1px;height:1.1px;background:#605e5c;"></div>
<div class="a" style="left:754.6px;top:328px;width:1.1px;height:1.1px;background:#605e5c;"></div>
<div class="a" style="left:749.0px;top:391px;width:1.1px;height:1.1px;background:#605e5c;"></div>
<div class="a" style="left:751.8px;top:391px;width:1.1px;height:1.1px;background:#605e5c;"></div>
<div class="a" style="left:754.6px;top:391px;width:1.1px;height:1.1px;background:#605e5c;"></div>
<div class="a" style="left:639px;top:185.8px;width:121px;height:39.79999999999998px;background:#f6f5f2;border:1px solid #dcdad7;border-radius:2px"></div>
<div class="a" style="left:639px;top:230.2px;width:121px;height:39.400000000000034px;background:#f6f5f2;border:1px solid #dcdad7;border-radius:2px"></div>
<div class="a" style="left:639px;top:273.7px;width:121px;height:29.69999999999999px;background:#f6f5f2;border:1px solid #dcdad7;border-radius:2px"></div>
<div class="a" style="left:639px;top:337.4px;width:121px;height:29.200000000000045px;background:#f6f5f2;border:1px solid #dcdad7;border-radius:2px"></div>
<div class="a" style="left:639px;top:400.5px;width:121px;height:29.19999999999999px;background:#f6f5f2;border:1px solid #dcdad7;border-radius:2px"></div>
<div class="t" style="left:645.6px;top:193.4px;font-size:7.6px;color:#1b1a19;">Product_Category</div>
<div class="t" style="left:645.6px;top:210.2px;font-size:7.6px;color:#1b1a19;">is (All)</div>
<div class="t" style="left:645.6px;top:237.3px;font-size:7.6px;color:#1b1a19;">Total orders</div>
<div class="t" style="left:645.6px;top:253.5px;font-size:7.6px;color:#1b1a19;">is (All)</div>
<div class="t" style="left:639.6px;top:285px;width:120px;text-align:center;font-size:7.6px;color:#1b1a19;">Add data fields here</div>
<div class="t" style="left:639.7px;top:322px;font-size:7.6px;color:#1b1a19;">Filters on this page</div>
<div class="t" style="left:639.6px;top:348px;width:120px;text-align:center;font-size:7.6px;color:#1b1a19;">Add data fields here</div>
<div class="t" style="left:639.7px;top:385px;font-size:7.6px;color:#1b1a19;">Filters on all pages</div>
<div class="t" style="left:639.6px;top:411.7px;width:120px;text-align:center;font-size:7.6px;color:#1b1a19;">Add data fields here</div>
<div class="t" style="left:770.5px;top:113px;font-size:9.8px;color:#1b1a19;font-weight:bold;">Visualizations</div>
<svg style="left:869px;top:113px" width="9" height="8" viewBox="0 0 9 8"><path d="M0.7 0.7L3.8 4L0.7 7.3M4.7 0.7L7.8 4L4.7 7.3" fill="none" stroke="#252423" stroke-width="1.1"/></svg>
<div class="t" style="left:770.5px;top:130.5px;font-size:7.3px;color:#1b1a19;font-weight:bold;">Build visual</div>
<div class="a" style="left:770.5px;top:141.5px;width:20.5px;height:20.3px;background:#dcdcdc;border-radius:1px"></div>
<svg style="left:773px;top:143px" width="16" height="17" viewBox="0 0 16 17"><path d="M0.5 1.2H11" stroke="#252423" stroke-width="1.1"/><rect x="0" y="4" width="16" height="5.5" fill="#117865"/><rect x="0" y="11" width="16" height="5.5" fill="#117865"/><path d="M0 9.9H16M0 3.6H16M0 10.6H16" stroke="#fff" stroke-width="0.6" stroke-dasharray="1 1"/></svg>
<svg style="left:817px;top:144.5px" width="16" height="16" viewBox="0 0 16 16"><path d="M1 15V7.5H4V15 M4 7.5V2H8V9" fill="none" stroke="#252423" stroke-width="1"/><path d="M8 4.5H11V7" fill="none" stroke="#252423" stroke-width="1"/><path d="M3.5 15.2L5 12L12.8 4.5C13.5 3.8 14.6 3.9 15 4.5C15.4 5.1 15.3 6 14.6 6.6L6.6 14.2Z" fill="#f3f2f1" stroke="#252423" stroke-width="1"/></svg>
<svg style="left:859px;top:144px" width="17" height="17" viewBox="0 0 17 17"><circle cx="7" cy="7" r="6.2" fill="none" stroke="#252423" stroke-width="1.2"/><path d="M11.4 11.4L16 16" stroke="#252423" stroke-width="1.6"/><path d="M3 10V7.5M5.5 10V5.5M8 10V7M10.5 10V4.5M1.8 8.5L5 4.5L8 6.5L12 3" fill="none" stroke="#252423" stroke-width="0.9"/></svg>
<svg style="left:766px;top:163px" width="116" height="8" viewBox="0 0 116 8"><path d="M0 6.6H8L13.5 1.2L19 6.6H116" fill="none" stroke="#a19f9d" stroke-width="1"/></svg>
<svg style="left:772px;top:177.8px" width="12" height="12" viewBox="0 0 12 12"><path d="M0.5 0V11.5H12" fill="none" stroke="#3b3a39" stroke-width="1"/><rect x="2" y="1.5" width="4" height="2.5" fill="#2b88d8" stroke="#3b3a39" stroke-width="0.6"/><rect x="6" y="1.5" width="3" height="2.5" fill="#fff" stroke="#3b3a39" stroke-width="0.6"/><rect x="2" y="5.5" width="6" height="2.5" fill="#fff" stroke="#3b3a39" stroke-width="0.6"/><rect x="2" y="8.8" width="9" height="1.8" fill="#fff" stroke="#3b3a39" stroke-width="0.6"/></svg>
<svg style="left:790.3px;top:177.8px" width="12" height="12" viewBox="0 0 12 12"><rect x="-2.5" y="-2.5" width="17" height="16" fill="none" stroke="#3b3a39" stroke-width="0.9"/><path d="M0.5 0V11.5H12" fill="none" stroke="#3b3a39" stroke-width="1"/><rect x="2" y="5" width="2.5" height="6" fill="#2b88d8"/><rect x="5.5" y="2" width="2.5" height="9" fill="#fff" stroke="#3b3a39" stroke-width="0.7"/><rect x="9" y="3.5" width="2.3" height="7.5" fill="#fff" stroke="#3b3a39" stroke-width="0.7"/></svg>
<svg style="left:808.6px;top:177.8px" width="12" height="12" viewBox="0 0 12 12"><path d="M0.5 0V11.5H12" fill="none" stroke="#3b3a39" stroke-width="1"/><rect x="1.5" y="1" width="8" height="2.8" fill="#2b88d8"/><rect x="1.5" y="4.5" width="4" height="2" fill="#fff" stroke="#3b3a39" stroke-width="0.6"/><rect x="1.5" y="7.5" width="6" height="1.6" fill="#2b88d8"/><rect x="1.5" y="9.5" width="9" height="1.2" fill="#3b3a39"/></svg>
<svg style="left:826.9px;top:177.8px" width="12" height="12" viewBox="0 0 12 12"><path d="M0.5 0V11.5H12" fill="none" stroke="#3b3a39" stroke-width="1"/><rect x="1.5" y="1" width="2.5" height="10" fill="#2b88d8"/><rect x="4" y="4" width="2" height="7" fill="#fff" stroke="#3b3a39" stroke-width="0.6"/><rect x="7" y="6" width="2" height="5" fill="#2b88d8"/><rect x="9.5" y="3" width="2" height="8" fill="#fff" stroke="#3b3a39" stroke-width="0.6"/></svg>
<svg style="left:845.2px;top:177.8px" width="12" height="12" viewBox="0 0 12 12"><path d="M0.5 0V11.5H12" fill="none" stroke="#3b3a39" stroke-width="1"/><rect x="1.5" y="1" width="10" height="2.5" fill="#2b88d8" stroke="#3b3a39" stroke-width="0.6"/><rect x="1.5" y="4.8" width="10" height="2.5" fill="#fff" stroke="#3b3a39" stroke-width="0.6"/><rect x="1.5" y="8.5" width="10" height="2.5" fill="#8cc3ef" stroke="#3b3a39" stroke-width="0.6"/></svg>
<svg style="left:863.5px;top:177.8px" width="12" height="12" viewBox="0 0 12 12"><path d="M0.5 0V11.5H12" fill="none" stroke="#3b3a39" stroke-width="1"/><rect x="2" y="1" width="2.5" height="10" fill="#fff" stroke="#3b3a39" stroke-width="0.6"/><rect x="5" y="1" width="2.5" height="10" fill="#2b88d8"/><rect x="8.3" y="1" width="2.5" height="10" fill="#fff" stroke="#3b3a39" stroke-width="0.6"/></svg>
<svg style="left:772px;top:196px" width="12" height="12" viewBox="0 0 12 12"><path d="M0.5 0V11.5H12" fill="none" stroke="#3b3a39" stroke-width="1"/><path d="M1 8L4 4L7 6.5L11 2" fill="none" stroke="#3b3a39" stroke-width="0.9"/><path d="M1 5L4 7L7 3.5L11 5" fill="none" stroke="#2b88d8" stroke-width="1"/></svg>
<svg style="left:790.3px;top:196px" width="12" height="12" viewBox="0 0 12 12"><path d="M0 11.5L3.5 4L6 8L8.5 2L12 11.5Z" fill="#fff" stroke="#3b3a39" stroke-width="0.8"/><path d="M0 11.5L3.5 7L6 9.5L9 6L12 11.5Z" fill="#2b88d8"/></svg>
<svg style="left:808.6px;top:196px" width="12" height="12" viewBox="0 0 12 12"><path d="M0.5 0V11.5H12" fill="none" stroke="#3b3a39" stroke-width="1"/><path d="M1 3L4 7L7 3.5L11 6" fill="none" stroke="#2b88d8" stroke-width="1.2"/><path d="M1 6L4 9.5L7 6.5L11 9" fill="none" stroke="#3b3a39" stroke-width="0.8"/></svg>
<svg style="left:826.9px;top:196px" width="12" height="12" viewBox="0 0 12 12"><path d="M0.5 0V11.5H12" fill="none" stroke="#3b3a39" stroke-width="1"/><path d="M1.5 1H11.5V8L8 5L5 8L1.5 5Z" fill="#2b88d8"/><path d="M1.5 1H11.5" stroke="#3b3a39" stroke-width="0.8"/></svg>
<svg style="left:845.2px;top:196px" width="12" height="12" viewBox="0 0 12 12"><path d="M0.5 0V11.5H12" fill="none" stroke="#3b3a39" stroke-width="1"/><rect x="2" y="3" width="2" height="8" fill="#fff" stroke="#3b3a39" stroke-width="0.6"/><rect x="5" y="5" width="2" height="6" fill="#2b88d8"/><rect x="8" y="2" width="2" height="9" fill="#fff" stroke="#3b3a39" stroke-width="0.6"/><path d="M1 9L5 4L8 7L12 3" fill="none" stroke="#3b3a39" stroke-width="0.8"/></svg>
<svg style="left:863.5px;top:196px" width="12" height="12" viewBox="0 0 12 12"><path d="M0.5 0V11.5H12" fill="none" stroke="#3b3a39" stroke-width="1"/><rect x="2" y="6" width="2" height="5" fill="#2b88d8"/><rect x="4.5" y="3" width="2" height="8" fill="#fff" stroke="#3b3a39" stroke-width="0.6"/><rect x="8" y="2" width="2" height="9" fill="#fff" stroke="#3b3a39" stroke-width="0.6"/><path d="M1 9L5 5L8 8L12 3" fill="none" stroke="#3b3a39" stroke-width="0.8"/></svg>
<svg style="left:772px;top:214.2px" width="12" height="12" viewBox="0 0 12 12"><path d="M0.5 0V11.5H12" fill="none" stroke="#3b3a39" stroke-width="1"/><path d="M1 2L4 6L7 3L11 6V9L7 7L4 9L1 6Z" fill="#2b88d8"/><path d="M1 9L4 6.5L7 9L11 6.5V10.5H1Z" fill="#f7a400"/></svg>
<svg style="left:790.3px;top:214.2px" width="12" height="12" viewBox="0 0 12 12"><path d="M0.5 0V11.5H12" fill="none" stroke="#3b3a39" stroke-width="1"/><rect x="2" y="5" width="2" height="6" fill="#fff" stroke="#3b3a39" stroke-width="0.7"/><rect x="5" y="3" width="2" height="4" fill="#fff" stroke="#3b3a39" stroke-width="0.7"/><rect x="8" y="1" width="2.5" height="10" fill="#fff" stroke="#3b3a39" stroke-width="0.8"/></svg>
<svg style="left:808.6px;top:214.2px" width="12" height="12" viewBox="0 0 12 12"><path d="M0.5 1H11.5V4H0.5Z" fill="#2b88d8"/><path d="M2 5H10V8H2Z" fill="#2b88d8"/><path d="M3.5 9H8.5V11.5H3.5Z" fill="#2b88d8"/><path d="M0.5 1H11.5V4H0.5Z" fill="none" stroke="#3b3a39" stroke-width="0.5"/></svg>
<svg style="left:826.9px;top:214.2px" width="12" height="12" viewBox="0 0 12 12"><path d="M0.5 0V11.5H12" fill="none" stroke="#3b3a39" stroke-width="1"/><rect x="3" y="2" width="1.4" height="1.4" fill="#3b3a39"/><rect x="6" y="5" width="1.4" height="1.4" fill="#2b88d8"/><rect x="9" y="3" width="1.4" height="1.4" fill="#3b3a39"/><rect x="3.5" y="8" width="1.4" height="1.4" fill="#2b88d8"/><rect x="8" y="8" width="1.4" height="1.4" fill="#2b88d8"/></svg>
<svg style="left:845.2px;top:214.2px" width="12" height="12" viewBox="0 0 12 12"><circle cx="6" cy="6" r="5.5" fill="#fff" stroke="#3b3a39" stroke-width="0.9"/><path d="M6 6V0.5A5.5 5.5 0 0 1 9.5 10.2Z" fill="#8cc3ef" stroke="#3b3a39" stroke-width="0.6"/></svg>
<svg style="left:863.5px;top:214.2px" width="12" height="12" viewBox="0 0 12 12"><circle cx="6" cy="6" r="4.6" fill="none" stroke="#2b88d8" stroke-width="2.2"/><path d="M6 1.4A4.6 4.6 0 0 1 10.6 6" fill="none" stroke="#8cc3ef" stroke-width="2.2"/></svg>
<svg style="left:772px;top:232.4px" width="12" height="12" viewBox="0 0 12 12"><rect x="0.3" y="0.3" width="11.4" height="11.4" fill="#fff" stroke="#3b3a39" stroke-width="0.6"/><rect x="0.5" y="0.5" width="7" height="11" fill="#2b88d8"/><path d="M4 0.5V11.5M0.5 4.5H7.5M0.5 8H7.5M7.5 6H11.5" stroke="#fff" stroke-width="0.6"/></svg>
<svg style="left:790.3px;top:232.4px" width="12" height="12" viewBox="0 0 12 12"><circle cx="6" cy="5.5" r="4.5" fill="#fff" stroke="#3b3a39" stroke-width="1"/><path d="M4 3.5C5 2.5 7 3 6.5 5C6 6.5 7.5 7 5.5 8" fill="none" stroke="#2ea043" stroke-width="1.3"/><path d="M3 11.5H9M6 10V11.5" stroke="#3b3a39" stroke-width="1"/></svg>
<svg style="left:808.6px;top:232.4px" width="12" height="12" viewBox="0 0 12 12"><path d="M0.5 2L3 0.5L6 2L11.5 1V9L8 11.5L4 10L0.5 11Z" fill="#2b88d8" stroke="#3b3a39" stroke-width="0.6"/><path d="M6 2V7L11.5 5" fill="none" stroke="#fff" stroke-width="0.7"/></svg>
<svg style="left:826.9px;top:232.4px" width="12" height="12" viewBox="0 0 12 12"><path d="M6.5 0L11 11.5L6.5 8.5L1.5 11.5Z" fill="#2b88d8"/><path d="M6.5 0L6.5 8.5L1.5 11.5Z" fill="#1c6fb8"/></svg>
<svg style="left:845.2px;top:232.4px" width="12" height="12" viewBox="0 0 12 12"><path d="M0.8 10A5.2 5.2 0 0 1 11.2 10" fill="none" stroke="#3b3a39" stroke-width="1.6"/><path d="M6 3.8A5.2 6 0 0 1 11.2 10" fill="none" stroke="#2b88d8" stroke-width="1.6"/><path d="M6 10L8.5 6.5" stroke="#3b3a39" stroke-width="0.9"/></svg>
<svg style="left:863.5px;top:232.4px" width="12" height="12" viewBox="0 0 12 12"><rect x="1" y="3" width="11" height="8.5" fill="#fff" stroke="#3b3a39" stroke-width="0.8"/><text x="4" y="9.8" font-family="Liberation Sans" font-size="5" fill="#2b88d8">123</text><path d="M2.5 0.5L0.5 6H2.5L1.5 9L5 4H3L4.5 0.5Z" fill="#e8742a"/></svg>
<svg style="left:772px;top:250.7px" width="12" height="12" viewBox="0 0 12 12"><rect x="0.5" y="1.5" width="11" height="9" fill="#fff" stroke="#3b3a39" stroke-width="0.9"/><rect x="1.5" y="3" width="9" height="5.5" fill="#8cc3ef"/><text x="2" y="7.6" font-family="Liberation Sans" font-size="4.6" font-weight="bold" fill="#fff">123</text></svg>
<svg style="left:790.3px;top:250.7px" width="12" height="12" viewBox="0 0 12 12"><rect x="0.5" y="0.5" width="11" height="11" fill="#fff" stroke="#3b3a39" stroke-width="0.9"/><path d="M3 4H9M3 6.5H7M3 8.5H9" stroke="#2b88d8" stroke-width="1"/></svg>
<svg style="left:808.6px;top:250.7px" width="12" height="12" viewBox="0 0 12 12"><rect x="0.5" y="1" width="11" height="10" fill="#fff" stroke="#3b3a39" stroke-width="0.9"/><path d="M3 7L4.5 4L6 7Z" fill="#2ea043"/><path d="M6.5 3.5H10L8.2 6.5Z" fill="#d13438"/></svg>
<svg style="left:826.9px;top:250.7px" width="12" height="12" viewBox="0 0 12 12"><rect x="0.5" y="0.5" width="10" height="10" fill="#fff" stroke="#3b3a39" stroke-width="0.9"/><rect x="2.5" y="3" width="2" height="2" fill="#3b3a39"/><rect x="2.5" y="6.5" width="2" height="2" fill="#3b3a39"/><path d="M6 6.5H12L9.8 9V12L8.2 11V9Z" fill="#fff" stroke="#3b3a39" stroke-width="0.8"/></svg>
<svg style="left:845.2px;top:250.7px" width="12" height="12" viewBox="0 0 12 12"><rect x="0.5" y="0.5" width="11" height="11" fill="#fff" stroke="#3b3a39" stroke-width="0.9"/><path d="M0.5 3.5H11.5M0.5 6.5H11.5M0.5 9H11.5M4 0.5V11.5M8 0.5V11.5" stroke="#3b3a39" stroke-width="0.6"/></svg>
<svg style="left:863.5px;top:250.7px" width="12" height="12" viewBox="0 0 12 12"><rect x="0.5" y="0.5" width="11" height="11" fill="#2b88d8" stroke="#3b3a39" stroke-width="0.9"/><path d="M0.5 3.5H11.5M0.5 6.5H11.5M0.5 9H11.5M4 0.5V11.5M8 0.5V11.5" stroke="#fff" stroke-width="0.6"/><rect x="0.5" y="0.5" width="11" height="3" fill="#fff" stroke="#3b3a39" stroke-width="0.6"/></svg>
<svg style="left:772px;top:268.9px" width="12" height="12" viewBox="0 0 12 12"><text x="1.5" y="11" font-family="Liberation Sans" font-weight="bold" font-size="11" fill="#2b88d8">R</text></svg>
<svg style="left:790.3px;top:268.9px" width="12" height="12" viewBox="0 0 12 12"><text x="-1.5" y="10.5" font-family="Liberation Sans" font-weight="bold" font-size="10" fill="#2b88d8">Py</text></svg>
<svg style="left:808.6px;top:268.9px" width="12" height="12" viewBox="0 0 12 12"><path d="M0.5 0V11.5H12" fill="none" stroke="#3b3a39" stroke-width="1"/><path d="M2 3H9M2 6H6M2 9H4" stroke="#3b3a39" stroke-width="0.9"/><circle cx="10" cy="3" r="1.4" fill="#fff" stroke="#2b88d8" stroke-width="0.9"/><circle cx="7" cy="6" r="1.1" fill="#2b88d8"/></svg>
<svg style="left:826.9px;top:268.9px" width="12" height="12" viewBox="0 0 12 12"><rect x="0" y="5" width="3.5" height="2.5" fill="#2b88d8"/><path d="M3.5 6.2H6M6 1.5V11M6 1.5H8M6 6.2H8M6 11H8" fill="none" stroke="#3b3a39" stroke-width="0.8"/><rect x="8" y="0.5" width="3.5" height="2.5" fill="#2b88d8"/><rect x="8" y="5" width="3.5" height="2.5" fill="#2b88d8"/><rect x="8" y="9.5" width="3.5" height="2.5" fill="#2b88d8"/></svg>
<svg style="left:845.2px;top:268.9px" width="12" height="12" viewBox="0 0 12 12"><path d="M0.5 0.5H11.5V8.5H4.5L2 11V8.5H0.5Z" fill="#fff" stroke="#2b88d8" stroke-width="1.1"/></svg>
<svg style="left:863.5px;top:268.9px" width="12" height="12" viewBox="0 0 12 12"><path d="M2 0.5H8L11 3.5V11.5H2Z" fill="#fff" stroke="#3b3a39" stroke-width="0.9"/><path d="M4 6H9M5 8.5H9" stroke="#2b88d8" stroke-width="0.9"/><circle cx="2" cy="4.5" r="1" fill="#2b88d8"/></svg>
<svg style="left:772px;top:286.8px" width="12" height="12" viewBox="0 0 12 12"><path d="M3 0.5H9V5C9 7 7.5 8 6 8C4.5 8 3 7 3 5Z" fill="#2b88d8" stroke="#3b3a39" stroke-width="0.7"/><path d="M3 2H0.8V3.5C0.8 5 2 5.5 3 5.5M9 2H11.2V3.5C11.2 5 10 5.5 9 5.5" fill="none" stroke="#3b3a39" stroke-width="0.8"/><path d="M6 8V10M3 11.5H9" stroke="#2b88d8" stroke-width="1.2"/></svg>
<svg style="left:790.3px;top:286.8px" width="12" height="12" viewBox="0 0 12 12"><path d="M1.5 0.5H7.5L10.5 3.5V11.5H1.5Z" fill="#fff" stroke="#3b3a39" stroke-width="0.9"/><path d="M4 10V8M6 10V6M8 10V7" stroke="#3b3a39" stroke-width="1"/></svg>
<svg style="left:808.6px;top:286.8px" width="12" height="12" viewBox="0 0 12 12"><rect x="2" y="1" width="8" height="8" fill="#fff" stroke="#3b3a39" stroke-width="0.7"/><path d="M3.5 3L5 1.5L8 4.5" stroke="#2b88d8" stroke-width="0.8" fill="none"/><path d="M2.5 0L0.5 5H2L1 8.5L4.5 3.5H3L4 0Z" fill="#e8742a"/><path d="M6 7H12L9.8 9.5V12L8.2 11V9.5Z" fill="#fff" stroke="#3b3a39" stroke-width="0.8"/></svg>
<svg style="left:826.9px;top:286.8px" width="12" height="12" viewBox="0 0 12 12"><rect x="2" y="1" width="9" height="8" fill="#fff" stroke="#3b3a39" stroke-width="0.7"/><path d="M5 6L6.5 2.5L8 6" stroke="#2b88d8" stroke-width="0.8" fill="none"/><path d="M2.5 0L0.5 5H2L1 8.5L4.5 3.5H3L4 0Z" fill="#e8742a"/><path d="M6 7H12L9.8 9.5V12L8.2 11V9.5Z" fill="#fff" stroke="#3b3a39" stroke-width="0.8"/></svg>
<svg style="left:845.2px;top:286.8px" width="12" height="12" viewBox="0 0 12 12"><rect x="2" y="1" width="9" height="8" fill="#fff" stroke="#3b3a39" stroke-width="0.7" stroke-dasharray="1.5 0.8"/><path d="M2.5 0L0.5 5H2L1 8.5L4.5 3.5H3L4 0Z" fill="#e8742a"/><path d="M6 7H12L9.8 9.5V12L8.2 11V9.5Z" fill="#fff" stroke="#3b3a39" stroke-width="0.8"/></svg>
<svg style="left:863.5px;top:286.8px" width="12" height="12" viewBox="0 0 12 12"><rect x="0.5" y="1" width="11" height="9.5" fill="#fff" stroke="#3b3a39" stroke-width="0.9"/><path d="M1 10L4.5 5.5L7 8L9 6L11 9V10Z" fill="#2b88d8"/><circle cx="9" cy="3.5" r="0.9" fill="#e8742a"/></svg>
<svg style="left:772px;top:304.7px" width="12" height="12" viewBox="0 0 12 12"><rect x="0.5" y="1" width="10.5" height="10.5" fill="#fff" stroke="#2b88d8" stroke-width="1.3"/><path d="M3 6L6 3L8.5 5.5" fill="none" stroke="#2b88d8" stroke-width="1.2"/><rect x="1" y="0" width="3" height="4.5" fill="#e8742a"/><circle cx="10.5" cy="10.5" r="1.6" fill="#e8742a"/></svg>
<svg style="left:790.3px;top:304.7px" width="12" height="12" viewBox="0 0 12 12"><path d="M6 0.5L11.5 6L6 11.5L0.5 6Z" fill="#fff" stroke="#8e3fbf" stroke-width="1.2"/><circle cx="4.5" cy="6" r="1.4" fill="none" stroke="#8e3fbf" stroke-width="0.8"/><circle cx="7.5" cy="6" r="1.4" fill="none" stroke="#8e3fbf" stroke-width="0.8"/><circle cx="6" cy="4.5" r="1.4" fill="none" stroke="#8e3fbf" stroke-width="0.8"/><circle cx="6" cy="7.5" r="1.4" fill="none" stroke="#8e3fbf" stroke-width="0.8"/></svg>
<svg style="left:808.6px;top:304.7px" width="12" height="12" viewBox="0 0 12 12"><path d="M0.5 1.5H6L11 6L6 10.5H0.5L5 6Z" fill="#fff" stroke="#2b88d8" stroke-width="1.1"/><path d="M3 4L6 6.5L3 9" fill="none" stroke="#2b88d8" stroke-width="0.9"/></svg>
<svg style="left:826.9px;top:304.7px" width="12" height="12" viewBox="0 0 12 12"><circle cx="2" cy="6" r="0.8" fill="#3b3a39"/><circle cx="6" cy="6" r="0.8" fill="#3b3a39"/><circle cx="10" cy="6" r="0.8" fill="#3b3a39"/></svg>
<div class="a" style="left:766px;top:322.5px;width:116px;height:1px;background:#e1dfdd;"></div>
<div class="a" style="left:879px;top:325.7px;width:3px;height:120px;background:#8a8886;border-radius:1.5px"></div>
<div class="t" style="left:773px;top:331px;font-size:7.6px;color:#1b1a19;">X-axis</div>
<div class="a" style="left:767.7px;top:343.5px;width:110.5px;height:23.100000000000023px;background:transparent;border:1px dotted #c8c6c4"></div>
<div class="a" style="left:770.3px;top:345.6px;width:106px;height:13.899999999999977px;background:#e8e7e5;border:1px solid #c8c6c4;border-radius:1px"></div>
<div class="t" style="left:773px;top:349.6px;font-size:7.6px;color:#1b1a19;">Product_Category</div>
<svg style="left:857px;top:351.1px" width="7" height="4" viewBox="0 0 7 4"><path d="M0.5 0.5L3.5 3.5L6.5 0.5" fill="none" stroke="#252423" stroke-width="0.9"/></svg>
<svg style="left:868px;top:349.6px" width="6" height="6" viewBox="0 0 6 6"><path d="M0.5 0.5L5.5 5.5M5.5 0.5L0.5 5.5" stroke="#252423" stroke-width="0.9"/></svg>
<div class="t" style="left:773px;top:374.5px;font-size:7.6px;color:#1b1a19;">Y-axis</div>
<div class="a" style="left:767.7px;top:387px;width:110.5px;height:22.30000000000001px;background:transparent;border:1px dotted #c8c6c4"></div>
<div class="a" style="left:770.3px;top:389.4px;width:106px;height:14.0px;background:#e8e7e5;border:1px solid #c8c6c4;border-radius:1px"></div>
<div class="t" style="left:773px;top:393.4px;font-size:7.6px;color:#1b1a19;">Total orders</div>
<svg style="left:857px;top:394.9px" width="7" height="4" viewBox="0 0 7 4"><path d="M0.5 0.5L3.5 3.5L6.5 0.5" fill="none" stroke="#252423" stroke-width="0.9"/></svg>
<svg style="left:868px;top:393.4px" width="6" height="6" viewBox="0 0 6 6"><path d="M0.5 0.5L5.5 5.5M5.5 0.5L0.5 5.5" stroke="#252423" stroke-width="0.9"/></svg>
<div class="t" style="left:773px;top:418.5px;font-size:7.6px;color:#1b1a19;">Legend</div>
<div class="a" style="left:767.7px;top:431px;width:110.5px;height:17.80000000000001px;background:#ffffff;border:1px dotted #c8c6c4"></div>
<div class="t" style="left:774.6px;top:436px;font-size:7.6px;color:#1b1a19;">Add data fields here</div>
<div class="t" style="left:773px;top:457.4px;font-size:7.6px;color:#1b1a19;">Small multiples</div>
<div class="a" style="left:767.7px;top:470.2px;width:110.5px;height:17.69999999999999px;background:#ffffff;border:1px dotted #c8c6c4"></div>
<div class="t" style="left:774.6px;top:475.2px;font-size:7.6px;color:#1b1a19;">Add data fields here</div>
<div class="t" style="left:773px;top:496px;font-size:7.6px;color:#1b1a19;">Tooltips</div>
<div class="a" style="left:767.7px;top:509.3px;width:110.5px;height:6px;border-top:1px dotted #c8c6c4"></div>
<div class="t" style="left:888.8px;top:112.8px;font-size:10.2px;color:#1b1a19;font-weight:bold;">Data</div>
<svg style="left:987px;top:113px" width="9" height="8" viewBox="0 0 9 8"><path d="M0.7 0.7L3.8 4L0.7 7.3M4.7 0.7L7.8 4L4.7 7.3" fill="none" stroke="#252423" stroke-width="1.1"/></svg>
<div class="a" style="left:885.8px;top:134px;width:111.8px;height:15.1px;background:#fdfdfd;border:1px solid #c8c6c4;border-radius:3px"></div>
<svg style="left:892.7px;top:137.5px" width="10" height="10" viewBox="0 0 10 10"><circle cx="4" cy="4" r="3.4" fill="none" stroke="#3b3a39" stroke-width="1"/><path d="M6.4 6.4L9.5 9.5" stroke="#3b3a39" stroke-width="1.1"/></svg>
<div class="t" style="left:907.8px;top:139px;font-size:8.2px;color:#605e5c;">Search</div>
<svg style="left:892.7px;top:160.0px" width="5" height="7" viewBox="0 0 5 7"><path d="M0.6 0.5L3.8 3.5L0.6 6.5" fill="none" stroke="#3b3a39" stroke-width="0.9"/></svg>
<svg style="left:902px;top:159.0px" width="8" height="8" viewBox="0 0 8 8"><rect x="0.5" y="0.5" width="7" height="7" rx="0.8" fill="none" stroke="#3b3a39" stroke-width="0.9"/><path d="M0.5 2.8H7.5M0.5 5.2H7.5M2.8 0.5V7.5M5.2 0.5V7.5" stroke="#3b3a39" stroke-width="0.7"/></svg>
<div class="t" style="left:913.6px;top:159.5px;font-size:7.6px;color:#1b1a19;">calendar</div>
<svg style="left:892.7px;top:175.6px" width="5" height="7" viewBox="0 0 5 7"><path d="M0.6 0.5L3.8 3.5L0.6 6.5" fill="none" stroke="#3b3a39" stroke-width="0.9"/></svg>
<svg style="left:902px;top:174.6px" width="8" height="8" viewBox="0 0 8 8"><rect x="0.5" y="0.5" width="7" height="7" rx="0.8" fill="none" stroke="#3b3a39" stroke-width="0.9"/><path d="M0.5 2.8H7.5M0.5 5.2H7.5M2.8 0.5V7.5M5.2 0.5V7.5" stroke="#3b3a39" stroke-width="0.7"/></svg>
<div class="t" style="left:913.6px;top:175.1px;font-size:7.6px;color:#1b1a19;">inventory</div>
<svg style="left:892.7px;top:191.2px" width="5" height="7" viewBox="0 0 5 7"><path d="M0.6 0.5L3.8 3.5L0.6 6.5" fill="none" stroke="#3b3a39" stroke-width="0.9"/></svg>
<svg style="left:902px;top:190.2px" width="8" height="8" viewBox="0 0 8 8"><rect x="0.5" y="0.5" width="7" height="7" rx="0.8" fill="none" stroke="#3b3a39" stroke-width="0.9"/><path d="M0.5 2.8H7.5M0.5 5.2H7.5M2.8 0.5V7.5M5.2 0.5V7.5" stroke="#3b3a39" stroke-width="0.7"/></svg>
<div class="t" style="left:913.6px;top:190.7px;font-size:7.6px;color:#1b1a19;">products</div>
<svg style="left:906.3px;top:195.2px" width="6" height="6" viewBox="0 0 6 6"><circle cx="3" cy="3" r="3" fill="#117865"/><path d="M1.5 3L2.6 4L4.5 2" fill="none" stroke="#fff" stroke-width="0.8"/></svg>
<svg style="left:892.7px;top:206.8px" width="5" height="7" viewBox="0 0 5 7"><path d="M0.6 0.5L3.8 3.5L0.6 6.5" fill="none" stroke="#3b3a39" stroke-width="0.9"/></svg>
<svg style="left:902px;top:205.8px" width="8" height="8" viewBox="0 0 8 8"><rect x="0.5" y="0.5" width="7" height="7" rx="0.8" fill="none" stroke="#3b3a39" stroke-width="0.9"/><path d="M0.5 2.8H7.5M0.5 5.2H7.5M2.8 0.5V7.5M5.2 0.5V7.5" stroke="#3b3a39" stroke-width="0.7"/></svg>
<div class="t" style="left:913.6px;top:206.3px;font-size:7.6px;color:#1b1a19;">sales</div>
<svg style="left:906.3px;top:210.8px" width="6" height="6" viewBox="0 0 6 6"><circle cx="3" cy="3" r="3" fill="#117865"/><path d="M1.5 3L2.6 4L4.5 2" fill="none" stroke="#fff" stroke-width="0.8"/></svg>
<svg style="left:892.7px;top:222.4px" width="5" height="7" viewBox="0 0 5 7"><path d="M0.6 0.5L3.8 3.5L0.6 6.5" fill="none" stroke="#3b3a39" stroke-width="0.9"/></svg>
<svg style="left:902px;top:221.4px" width="8" height="8" viewBox="0 0 8 8"><rect x="0.5" y="0.5" width="7" height="7" rx="0.8" fill="none" stroke="#3b3a39" stroke-width="0.9"/><path d="M0.5 2.8H7.5M0.5 5.2H7.5M2.8 0.5V7.5M5.2 0.5V7.5" stroke="#3b3a39" stroke-width="0.7"/></svg>
<div class="t" style="left:913.6px;top:221.9px;font-size:7.6px;color:#1b1a19;">stores</div>
<div class="a" style="left:0px;top:514px;width:1000px;height:16px;background:#f0f0f0;border-top:1px solid #cdcdcd"></div>
<div class="a" style="left:0px;top:530px;width:1000px;height:32px;background:#dfe4ec;"></div>
<div class="t" style="left:2.5px;top:520.2px;font-size:7.5px;color:#252423;">Page 1 of 1</div>
<div class="a" style="left:862.5px;top:522.5px;width:2.5px;height:1.5px;background:#3b3a39;"></div>
<div class="a" style="left:868px;top:523px;width:65px;height:1px;background:#3b3a39;"></div>
<div class="a" style="left:900px;top:520px;width:2px;height:7px;background:#252423;"></div>
<svg style="left:937px;top:520.5px" width="5" height="6" viewBox="0 0 5 6"><path d="M2.5 0V6M0 3H5" stroke="#252423" stroke-width="1"/></svg>
<div class="t" style="left:951.4px;top:519.6px;font-size:7.8px;color:#3b3a39;">100%</div>
<svg style="left:978px;top:519px" width="10" height="8" viewBox="0 0 10 8"><rect x="0.5" y="0.5" width="9" height="7" fill="none" stroke="#3b3a39" stroke-width="1"/><path d="M2 2H4M8 2H6M2 6H4M8 6H6" stroke="#3b3a39" stroke-width="0.8"/></svg>
<div class="a" style="left:0;top:529.4px;width:1000px;height:1.6px;background:#111"></div>
<div class="a" style="left:0;top:531px;width:1000px;height:31px;background:linear-gradient(90deg,#d7dde6 0%,#dde3ec 20%,#e8e6ea 35%,#efdfe2 50%,#eedcdf 65%,#e6e3e8 80%,#e6e7ea 100%)"></div>
<svg style="left:12px;top:539px" width="20" height="16" viewBox="0 0 20 16"><path d="M4 13C1.8 13 0.5 11.5 0.5 9.8C0.5 8 2 6.8 3.6 6.8C4.2 4.5 6 3 8.4 3C11 3 13 5 13.2 7.4C14.8 7.6 16 8.8 16 10.3C16 11.8 14.8 13 13.3 13Z" fill="#b7d3f2" stroke="#6a9fd8" stroke-width="0.8"/><path d="M9.5 11V15" stroke="#1a73e8" stroke-width="2.2" stroke-linecap="round"/></svg>
<svg style="left:20.5px;top:535px" width="10" height="10" viewBox="0 0 10 10"><circle cx="5" cy="5" r="4.8" fill="#c42b1c"/><text x="2.6" y="7.8" font-family="Liberation Sans" font-weight="bold" font-size="7.2" fill="#fff">3</text></svg>
<div class="t" style="left:34px;top:537.2px;font-size:8px;color:#000;">15°C</div>
<div class="t" style="left:34px;top:546.5px;font-size:7.6px;color:#3b3a39;direction:rtl;unicode-bidi:bidi-override;">أمطار خفيفة</div>
<svg style="left:192.5px;top:539px" width="16" height="15" viewBox="0 0 16 15"><g fill="#1f8ad8"><rect x="0" y="0" width="7.4" height="7" /><rect x="8.2" y="0" width="7.4" height="7"/><rect x="0" y="7.8" width="7.4" height="7.2"/><rect x="8.2" y="7.8" width="7.4" height="7.2"/></g></svg>
<div class="a" style="left:217.4px;top:536.6px;width:141.6px;height:19.8px;background:#f6f6f8;border-radius:10px;border:1px solid #e2e2e6"></div>
<svg style="left:225.5px;top:541.5px" width="10" height="10" viewBox="0 0 10 10"><circle cx="4" cy="4" r="3.3" fill="none" stroke="#1a1a1a" stroke-width="1.2"/><path d="M6.3 6.3L9.3 9.3" stroke="#1a1a1a" stroke-width="1.3"/></svg>
<div class="t" style="left:241.5px;top:542.5px;font-size:8.3px;color:#3b3a39;">Search</div>
<svg style="left:325px;top:537px" width="34" height="20" viewBox="0 0 34 20"><path d="M7 4C9 3 11 4 12 3.5C14 2.5 17 4 19 3.5C22 2.5 26 3.5 29 4C31 4.5 33 5 34 6V14H7Z" fill="#e9e4ef" opacity="0.0"/><path d="M26 6C27 4.5 28 5 29 4.5C30 5 31 4.5 32 5.5L32 8H25Z" fill="#c9a3b6"/><ellipse cx="17" cy="15.5" rx="16.5" ry="4.5" fill="#4aa3d8"/><ellipse cx="21" cy="14" rx="11" ry="2.6" fill="#7fc2ea"/><path d="M13.5 12C12 9 10 5 11 2.5C11.8 1 13.5 1.2 13.8 2.8" fill="none" stroke="#a998cc" stroke-width="2.8"/><path d="M13.5 12C12 9 10 5 11 2.5C11.8 1 13.5 1.2 13.8 2.8" fill="none" stroke="#fbf8ff" stroke-width="1.6"/><path d="M10 12.5C12 10 20 9.5 25 11C27 11.6 26.5 13.5 24 14.2C19 15.5 11.5 15 10 12.5Z" fill="#fbf8ff" stroke="#a998cc" stroke-width="0.7"/><path d="M10.5 2.6L8 3.6L10.8 4Z" fill="#f08a2a"/><path d="M14 13.5C17 14.5 21 14.3 24 13.2" fill="none" stroke="#b9b3d8" stroke-width="0.8"/></svg>
<svg style="left:367.5px;top:539px" width="17" height="16" viewBox="0 0 17 16"><rect x="5" y="0.5" width="11.5" height="11" fill="#f4f4f4" stroke="#d0d0d0" stroke-width="0.8"/><rect x="7.5" y="3" width="6.5" height="6" fill="#bcbcbc"/><path d="M0.5 4.5H5V11.5H12V15.5H0.5Z" fill="#141414"/></svg>
<svg style="left:396.7px;top:538.5px" width="17" height="17" viewBox="0 0 17 17"><defs><linearGradient id="eg" x1="0.9" y1="0.1" x2="0.1" y2="0.9"><stop offset="0" stop-color="#63d36a"/><stop offset="0.45" stop-color="#20a8c8"/><stop offset="1" stop-color="#0b63c4"/></linearGradient></defs><circle cx="8.5" cy="8.5" r="8" fill="url(#eg)"/><path d="M1 10C1 6 4 4.2 7.5 4.5C11 4.8 13 7 13 9.5C13 10.5 12 11 11 11H6.5C6.5 13.5 9.5 15.5 14 14C12.5 15.8 10.5 16.5 8.5 16.5C4.5 16.5 1 13.5 1 10Z" fill="#0d4fa0"/><ellipse cx="9.6" cy="9" rx="2.6" ry="1.7" fill="#eaf6ff"/></svg>
<svg style="left:425px;top:538.5px" width="17" height="17" viewBox="0 0 17 17"><circle cx="8.5" cy="8.5" r="8" fill="#0b46d2"/><text x="3" y="12" font-family="Liberation Serif" font-style="italic" font-weight="bold" font-size="10" fill="#fff">hp</text></svg>
<svg style="left:453.8px;top:538.5px" width="16" height="17" viewBox="0 0 16 17"><defs><linearGradient id="tg1" x1="0" y1="0" x2="0.6" y2="1"><stop offset="0" stop-color="#2d9cf0"/><stop offset="0.45" stop-color="#3fc07c"/><stop offset="0.8" stop-color="#f4b52a"/><stop offset="1" stop-color="#f05a2a"/></linearGradient><linearGradient id="tg2" x1="0.2" y1="0" x2="1" y2="1"><stop offset="0" stop-color="#2f5ee8"/><stop offset="0.5" stop-color="#a35ae6"/><stop offset="1" stop-color="#f2509c"/></linearGradient></defs><path d="M5 1.2H10.5L7 15.8H3.5C1.5 15.8 0.4 14 0.9 12L2.8 3.5C3.1 2 4 1.2 5 1.2Z" fill="url(#tg1)"/><path d="M11 15.8H5.5L9 1.2H12.5C14.5 1.2 15.6 3 15.1 5L13.2 13.5C12.9 15 12 15.8 11 15.8Z" fill="url(#tg2)"/><path d="M7 6H10L8.8 11H5.8Z" fill="#fff" opacity="0.9"/></svg>
<svg style="left:482px;top:539px" width="17" height="15" viewBox="0 0 17 15"><path d="M0.5 2C0.5 1 1 0.5 2 0.5H6L8 2.5H15C16 2.5 16.5 3 16.5 4V13C16.5 14 16 14.5 15 14.5H2C1 14.5 0.5 14 0.5 13Z" fill="#f2c24a"/><path d="M0.5 5H16.5V13C16.5 14 16 14.5 15 14.5H2C1 14.5 0.5 14 0.5 13Z" fill="#ffd865"/><rect x="4" y="9" width="9" height="2" fill="#1f8ad8"/></svg>
<div class="a" style="left:487px;top:557.5px;width:6px;height:1.5px;background:#6b6b6b;border-radius:1px"></div>
<svg style="left:511.5px;top:537px" width="17" height="18" viewBox="0 0 17 18"><circle cx="8" cy="10" r="7.5" fill="#2a8ae6"/><text x="4.8" y="14" font-family="Liberation Sans" font-weight="bold" font-size="11" fill="#fff">?</text><circle cx="13" cy="3.8" r="3.8" fill="#f7b52c"/></svg>
<svg style="left:539.5px;top:538.5px" width="16" height="16" viewBox="0 0 16 16"><path d="M1 4H15V14C15 15 14.5 15.5 13.5 15.5H2.5C1.5 15.5 1 15 1 14Z" fill="#1c4f9c"/><path d="M5 4V2.5C5 1 6 0.5 8 0.5C10 0.5 11 1 11 2.5V4" fill="none" stroke="#1c4f9c" stroke-width="1.2"/><rect x="5" y="7" width="2.6" height="2.6" fill="#f25022"/><rect x="8.4" y="7" width="2.6" height="2.6" fill="#7fba00"/><rect x="5" y="10.4" width="2.6" height="2.6" fill="#00a4ef"/><rect x="8.4" y="10.4" width="2.6" height="2.6" fill="#ffb900"/></svg>
<svg style="left:569px;top:538.5px" width="15" height="16" viewBox="0 0 15 16"><path d="M0.5 1.5L7.5 4.5L14.5 1.5V11.5L7.5 15L0.5 11.5Z" fill="#c01818"/><path d="M3 5L7.5 7.5L12 5V10.5L7.5 12.5L3 10.5Z" fill="#fff"/><path d="M5 7.5L7.5 9L10 7.5V10L7.5 11.3L5 10Z" fill="#c01818"/></svg>
<svg style="left:596px;top:539px" width="17" height="15" viewBox="0 0 17 15"><path d="M5 2L16.5 0.5V12.5L5 14Z" fill="#28a8ea"/><path d="M5 5H16.5V12.5C16.5 13.5 16 14 15 14H6C5.5 14 5 13.5 5 13Z" fill="#0a64c8"/><rect x="0.5" y="5" width="8" height="8" rx="1" fill="#0f4fa8"/><circle cx="4.5" cy="9" r="2.2" fill="none" stroke="#fff" stroke-width="1.1"/></svg>
<svg style="left:625px;top:538.5px" width="17" height="16" viewBox="0 0 17 16"><circle cx="8.5" cy="8" r="7.5" fill="#2e9bdc"/><path d="M1 9C3 12 7 14 12 12C15 11 16.5 8 16 6" fill="none" stroke="#6cc04a" stroke-width="2.2"/><path d="M1.5 7C4 10 9 10.5 13 9" fill="none" stroke="#f5b62a" stroke-width="1.6"/><path d="M7 2H10V6H12L8.5 9.5L5 6H7Z" fill="#1a1a1a"/></svg>
<svg style="left:654px;top:538.5px" width="17" height="17" viewBox="0 0 17 17"><circle cx="8.5" cy="8.5" r="8" fill="#db4437"/><path d="M8.5 8.5L1.6 4.5A8 8 0 0 0 8.5 16.5Z" fill="#0f9d58"/><path d="M8.5 8.5L8.5 16.5A8 8 0 0 0 15.4 4.5Z" fill="#f4b400"/><path d="M8.5 8.5L15.4 4.5A8 8 0 0 0 1.6 4.5Z" fill="#db4437"/><circle cx="8.5" cy="8.5" r="3.8" fill="#fff"/><circle cx="8.5" cy="8.5" r="3" fill="#4285f4"/></svg>
<div class="a" style="left:659px;top:557.5px;width:6px;height:1.5px;background:#6b6b6b;border-radius:1px"></div>
<svg style="left:682.5px;top:538.5px" width="17" height="17" viewBox="0 0 17 17"><path d="M8.5 0.8A7.7 7.7 0 0 1 8.5 16.2C7 16.2 5.6 15.8 4.5 15.1L0.8 16.2L1.9 12.6A7.7 7.7 0 0 1 8.5 0.8Z" fill="#fff" stroke="#1ea952" stroke-width="1.6"/><path d="M5.5 5.5C6 4.5 7 4.5 7.2 5.5L7.5 7C7 7.5 7 8 8 9C9 10 9.5 10 10 9.5L11.5 10C12.5 10.5 12 11.5 11 12C9 12.5 5 9 5.5 5.5Z" fill="#1ea952"/></svg>
<svg style="left:692.5px;top:535px" width="10" height="10" viewBox="0 0 10 10"><circle cx="5" cy="5" r="4.8" fill="#2b6fe0"/><text x="2.6" y="7.8" font-family="Liberation Sans" font-weight="bold" font-size="7" fill="#fff">2</text></svg>
<div class="a" style="left:687.5px;top:557.5px;width:6px;height:1.5px;background:#6b6b6b;border-radius:1px"></div>
<svg style="left:711px;top:538.5px" width="17" height="17" viewBox="0 0 17 17"><defs><radialGradient id="ff" cx="0.5" cy="0.7" r="0.7"><stop offset="0" stop-color="#ffbd2e"/><stop offset="0.5" stop-color="#ff6a2e"/><stop offset="1" stop-color="#e3256b"/></radialGradient></defs><circle cx="8.5" cy="9" r="7.6" fill="url(#ff)"/><circle cx="8.5" cy="9.5" r="4" fill="#6a2ad8"/><path d="M2 6C3 2 7 0.5 10 1.5C8 2 7 3.5 7.5 5C5 5 3.5 6 2 8Z" fill="#ff9a2e"/></svg>
<div class="a" style="left:716.5px;top:557.5px;width:6px;height:1.5px;background:#6b6b6b;border-radius:1px"></div>
<div class="a" style="left:736.7px;top:533px;width:24.6px;height:27px;background:rgba(255,255,255,0.55);border-radius:4px;border:1px solid rgba(255,255,255,0.8)"></div>
<svg style="left:741px;top:538px" width="16" height="17" viewBox="0 0 16 17"><rect x="0.5" y="6" width="4" height="11" rx="0.6" fill="#ffd14a"/><rect x="4.5" y="3" width="5" height="14" rx="0.6" fill="#e8b72a" /><rect x="9.5" y="0.5" width="5" height="16.5" rx="0.6" fill="#f2c811"/><path d="M0.5 6V17H14.5" fill="none" stroke="#1f4e8c" stroke-width="0" /><rect x="3" y="9" width="3" height="8" fill="#1b3f7a" opacity="0.55"/></svg>
<div class="a" style="left:742.5px;top:558.5px;width:13px;height:2px;background:#1f6fd6;border-radius:1px"></div>
<svg style="left:807px;top:545px" width="8" height="5" viewBox="0 0 8 5"><path d="M0.5 4.5L4 1L7.5 4.5" fill="none" stroke="#1a1a1a" stroke-width="1.1"/></svg>
<svg style="left:826px;top:542.5px" width="11" height="10" viewBox="0 0 11 10"><path d="M2.5 8C1.2 8 0.5 7 0.5 6C0.5 4.8 1.5 4 2.5 4C2.8 2.3 4 1 5.8 1C7.6 1 9 2.4 9 4.2" fill="none" stroke="#1a1a1a" stroke-width="0.9"/><circle cx="7.8" cy="7.2" r="2.6" fill="#d13438"/><path d="M6.7 6.1L8.9 8.3M8.9 6.1L6.7 8.3" stroke="#fff" stroke-width="0.7"/></svg>
<svg style="left:847px;top:541px" width="11" height="12" viewBox="0 0 11 12"><path d="M1.5 5C2 2.5 4 1 6 1C7.5 1 8.7 1.8 9.3 2.8M9.5 0.5V3H7" fill="none" stroke="#1a1a1a" stroke-width="0.9"/><path d="M5 11C3.5 11 2 10.2 1.3 9M1 11.5V9H3.5" fill="none" stroke="#1a1a1a" stroke-width="0.9"/><circle cx="7.8" cy="8.5" r="2.7" fill="#f7930e"/></svg>
<div class="t" style="left:869.5px;top:543px;font-size:7.6px;color:#1a1a1a;">ENG</div>
<svg style="left:896.4px;top:542.5px" width="11" height="8" viewBox="0 0 11 8"><path d="M0.5 3A7 7 0 0 1 10.5 3M2.2 4.8A4.6 4.6 0 0 1 8.8 4.8M3.9 6.5A2.2 2.2 0 0 1 7.1 6.5" fill="none" stroke="#1a1a1a" stroke-width="0.9"/><circle cx="5.5" cy="7.6" r="0.7" fill="#1a1a1a"/></svg>
<svg style="left:911.4px;top:542px" width="12" height="9" viewBox="0 0 12 9"><path d="M0.5 3H2.5L5.5 0.5V8.5L2.5 6H0.5Z" fill="none" stroke="#1a1a1a" stroke-width="0.9"/><path d="M7 2.5C8 3.5 8 5.5 7 6.5M8.8 1.2C10.5 3 10.5 6 8.8 7.8" fill="none" stroke="#1a1a1a" stroke-width="0.9"/></svg>
<svg style="left:927.5px;top:541.5px" width="14" height="10" viewBox="0 0 14 10"><rect x="0.5" y="2.5" width="12" height="7" rx="1.2" fill="#fff" stroke="#1a1a1a" stroke-width="0.9"/><rect x="1.8" y="3.8" width="9.4" height="4.4" fill="#3bb54a"/><rect x="12.8" y="4.8" width="1" height="2.4" fill="#1a1a1a"/><path d="M6.5 0V5M4.7 3.2L6.5 5L8.3 3.2" fill="none" stroke="#1a1a1a" stroke-width="0.9"/></svg>
<div class="t" style="left:955px;top:537px;font-size:7.8px;color:#1a1a1a;">11:21 PM</div>
<div class="t" style="left:951.6px;top:548.2px;font-size:7.8px;color:#1a1a1a;">3/13/2026</div>
</body></html>
